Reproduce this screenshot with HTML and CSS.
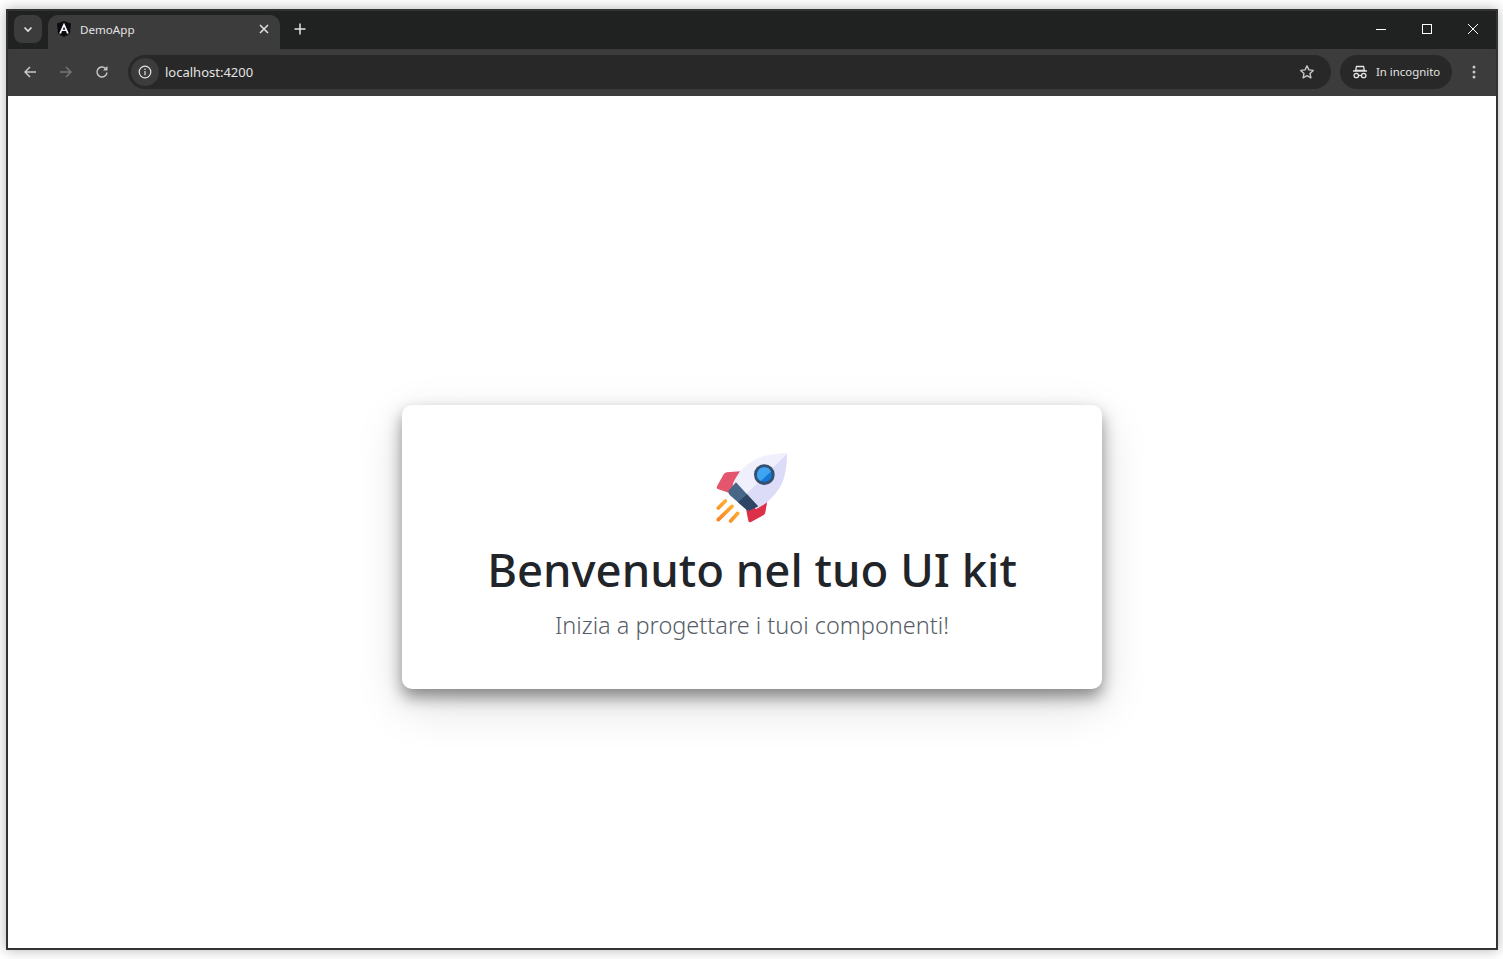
FILE: index.html
```html
<!DOCTYPE html>
<html lang="it">
<head>
<meta charset="utf-8">
<title>DemoApp</title>
<link rel="stylesheet" href="styles.css">
</head>
<body>
<div class="window">
  <div class="tabstrip">
    <button class="tabsearch"><svg width="12" height="12" viewBox="0 0 12 12"><path d="M2.500 4.500 6 8l3.500-3.500" fill="none" stroke="#e3e3e3" stroke-width="1.600"/></svg></button>
    <div class="tab">
      <svg class="favicon" width="16" height="16" viewBox="0 0 16 16"><path d="M8 0 1 2.500l1 10L8 16l6-3.500 1-10z" fill="#0b0b12"/><path d="M8 1.800 3.200 12.500h1.900l.9-2.400h4l.9 2.400h1.900zm0 3.900 1.300 3H6.700z" fill="#fff"/></svg>
      <span class="tabtitle">DemoApp</span>
      <svg class="tabclose" width="10" height="10" viewBox="0 0 10 10"><path d="M1 1l8 8M9 1 1 9" stroke="#e3e3e3" stroke-width="1.500"/></svg>
    </div>
    <svg class="newtab" width="12" height="12" viewBox="0 0 12 12"><path d="M6 .5v11M.5 6h11" stroke="#e3e3e3" stroke-width="1.500"/></svg>
    <div class="wincontrols">
      <svg width="12" height="12" viewBox="0 0 12 12"><path d="M1 6.500h10" stroke="#fff"/></svg>
      <svg width="12" height="12" viewBox="0 0 12 12"><rect x="1.500" y="1.500" width="9" height="9" fill="none" stroke="#fff"/></svg>
      <svg width="12" height="12" viewBox="0 0 12 12"><path d="M1 1l10 10M11 1 1 11" stroke="#fff"/></svg>
    </div>
  </div>
  <div class="toolbar">
    <div class="navicons">
      <svg width="16" height="16" viewBox="0 0 16 16"><path d="M14 8H3M8 3 3 8l5 5" fill="none" stroke="#c7c7c7" stroke-width="1.500"/></svg>
      <svg width="16" height="16" viewBox="0 0 16 16"><path d="M2 8h11M8 3l5 5-5 5" fill="none" stroke="#757575" stroke-width="1.500"/></svg>
      <svg width="16" height="16" viewBox="0 0 16 16"><path d="M13 8.500A5 5 0 1 1 11.500 4.400" fill="none" stroke="#c7c7c7" stroke-width="1.500"/><path d="M13.500 2v4.500H9z" fill="#c7c7c7"/></svg>
    </div>
    <div class="omnibox">
      <span class="siteinfo"><svg width="14" height="14" viewBox="0 0 14 14"><circle cx="7" cy="7" r="5.800" fill="none" stroke="#e3e3e3" stroke-width="1.200"/><path d="M7 6v4.200" stroke="#e3e3e3" stroke-width="1.200"/><circle cx="7" cy="4.200" r=".8" fill="#e3e3e3"/></svg></span>
      <span class="url">localhost:4200</span>
      <svg class="star" width="16" height="16" viewBox="0 0 16 16"><path d="m8 1.800 1.900 4.100 4.400.5-3.300 3 .9 4.400L8 11.600l-3.900 2.200.9-4.400-3.300-3 4.400-.5z" fill="none" stroke="#c7c7c7" stroke-width="1.400" stroke-linejoin="round"/></svg>
    </div>
    <div class="incognito">
      <svg width="16" height="16" viewBox="0 0 16 16"><path d="M4.500 2.500h7l1 4h-9zM1 7h14" fill="none" stroke="#e3e3e3" stroke-width="1.300"/><circle cx="4.300" cy="11.500" r="2.200" fill="none" stroke="#e3e3e3" stroke-width="1.300"/><circle cx="11.700" cy="11.500" r="2.200" fill="none" stroke="#e3e3e3" stroke-width="1.300"/><path d="M6.500 11.500h3" stroke="#e3e3e3" stroke-width="1.300"/></svg>
      <span>In incognito</span>
    </div>
    <svg class="menu" width="4" height="14" viewBox="0 0 4 14"><circle cx="2" cy="2" r="1.500" fill="#c7c7c7"/><circle cx="2" cy="7" r="1.500" fill="#c7c7c7"/><circle cx="2" cy="12" r="1.500" fill="#c7c7c7"/></svg>
  </div>
  <main class="page">
    <section class="card">
      <svg class="rocket" width="72" height="72" viewBox="50 40 216 216">
        <defs>
          <linearGradient id="flame" gradientUnits="userSpaceOnUse" x1="100" y1="190" x2="55" y2="245">
            <stop offset="0" stop-color="#fdb52f"/><stop offset="1" stop-color="#f97f25"/>
          </linearGradient>
        </defs>
        <path d="M122 95 82 98Q76 99 73 104L53 140Q50 147 57 149L90 160Z" fill="#e4566e"/>
        <path d="M205 178 198 218Q197 224 192 227L155 247Q148 250 147 243L140 208Z" fill="#dc2f48"/>
        <path d="M100 134C118 88 160 54 205 47 225 43 250 40 256 40 263 40 263 47 263 47 263 62 261 92 252 120 240 155 205 192 170 208Z" fill="#f0f0fc"/>
        <path d="M263 43C263 62 261 92 252 120 240 155 205 192 170 208L134 170Z" fill="#dcdcf8"/>
        <path d="M110 128 176 200 152 212Q146 214 140 209L91 166Q84 157 91 149Z" fill="#476789"/>
        <path d="M143 164 176 200 152 212Q146 214 140 209L116 188Z" fill="#2f4563"/>
        <circle cx="195" cy="105" r="31" fill="#36506f"/>
        <circle cx="195" cy="105" r="22" fill="#1478d8"/>
        <path d="M195 83a22 22 0 0 1 20 12.500L184 124a22 22 0 0 1 11-41z" fill="#3fa5f0"/>
        <path d="M57 205 78 184M57 240 98 200M94 244 115 221" stroke="url(#flame)" stroke-width="11" stroke-linecap="round" fill="none"/>
      </svg>
      <h1 class="title">Benvenuto nel tuo UI kit</h1>
      <p class="lead">Inizia a progettare i tuoi componenti!</p>
    </section>
  </main>
</div>
</body>
</html>
```
FILE: styles.css
```css
* { box-sizing: border-box; }
html, body { margin: 0; height: 100%; background: #fff; }
body { padding: 9px 5px 9px 6px; font-family: "Noto Sans", "Open Sans", sans-serif; overflow: hidden; }
button { border: 0; padding: 0; }
.window {
  height: 941px;
  display: flex;
  flex-direction: column;
  border: 2px solid #333;
  background: #3c3c3c;
  box-shadow: 0 0 12px rgba(0,0,0,.3);
}
.tabstrip {
  height: 38px;
  flex: none;
  display: flex;
  align-items: flex-start;
  background: #202222;
  padding: 4px 0 0 6px;
}
.tabsearch {
  width: 28px; height: 28px;
  background: #3c3c3c;
  border-radius: 8px;
  display: flex; align-items: center; justify-content: center;
  margin-right: 6px;
}
.tab {
  width: 232px; height: 34px;
  background: #3c3c3c;
  border-radius: 10px 10px 0 0;
  display: flex; align-items: center;
  padding: 0 11px 6px 8px;
  color: #e3e3e3;
  font-size: 11.600px;
}
.tabtitle { margin-left: 8px; flex: 1; }
.newtab { margin: 8px 0 0 14px; }
.wincontrols {
  margin-left: auto;
  display: flex;
  gap: 34px;
  padding: 8px 17px 0 0;
}
.toolbar {
  height: 47px;
  flex: none;
  display: flex;
  align-items: center;
  background: #3c3c3c;
  border-radius: 8px 8px 0 0;
  padding: 0 16px 2px 14px;
}
.navicons { display: flex; gap: 20px; width: 106px; }
.omnibox {
  width: 1203px; height: 34px;
  background: #282828;
  border-radius: 17px;
  display: flex; align-items: center;
  padding: 0 16px 0 3px;
  color: #e3e3e3;
  font-size: 13px;
}
.siteinfo {
  width: 28px; height: 28px; border-radius: 50%;
  background: #3c3c3c;
  display: flex; align-items: center; justify-content: center;
  margin-right: 6px;
}
.url { flex: 1; }
.incognito {
  width: 112px; height: 34px;
  margin-left: 9px;
  background: #282828;
  border-radius: 17px;
  display: flex; align-items: center; gap: 8px;
  padding-left: 12px;
  color: #e3e3e3;
  font-size: 11.400px;
}
.menu { margin-left: 20px; }
.page {
  flex: 1;
  background: #fff;
  display: flex;
  align-items: center;
  justify-content: center;
  padding-top: 48px;
}
.card {
  width: 700px; height: 284px;
  background: #fff;
  border-radius: 10px;
  box-shadow: 0 8px 16px rgba(0,0,0,.42), 0 16px 48px rgba(0,0,0,.14);
  display: flex;
  flex-direction: column;
  align-items: center;
  padding-top: 48px;
  margin-top: 1px;
}
.rocket { flex: none; }
.title {
  margin: 15px 0 0;
  font-size: 45.500px;
  font-weight: 500;
  line-height: 58px;
  color: #212529;
}
.lead {
  margin: 11px 0 0;
  font-size: 23.500px;
  font-weight: 300;
  line-height: 32px;
  color: #565d66;
}
```
